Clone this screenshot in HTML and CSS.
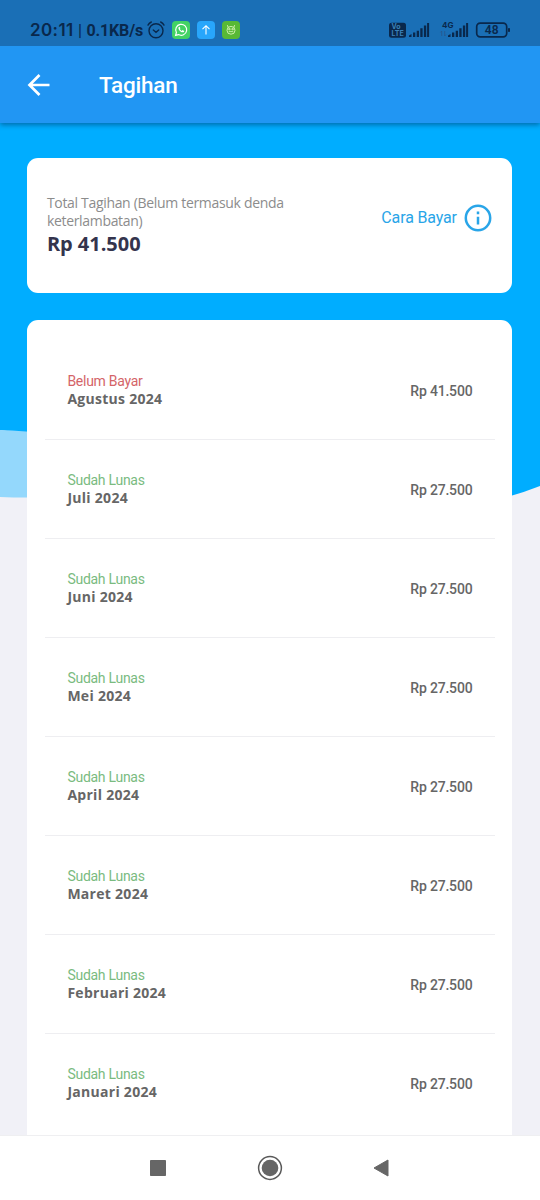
FILE: index.html
```html
<!DOCTYPE html>
<html lang="id">
<head>
<meta charset="utf-8">
<title>Tagihan</title>
<link rel="stylesheet" href="styles.css">
</head>
<body>
<div class="screen">
  <header class="top">
    <div class="status">
      <span class="clock">20:11</span><span class="sep">|</span><span class="speed">0.1KB/s</span>
      <svg class="alarm" width="18" height="18" viewBox="0 0 18 18" fill="none" stroke="#09284c" stroke-width="1.4" stroke-linecap="round"><circle cx="9" cy="9.8" r="7"/><path d="M1 4.1Q2 2 4.3 1M17 4.1Q16 2 13.7 1M6.3 9l2.7 2.3L11.7 9"/></svg>
      <svg class="app" width="18" height="18" viewBox="0 0 18 18"><rect width="18" height="18" rx="4" fill="#43d264"/><path d="M3.6 14.4l.8-2.9a5.5 5.5 0 1 1 2.1 2.1z" fill="none" stroke="#fff" stroke-width="1.2"/><path d="M6.8 5.9c-1.7 1.8 2.5 6.7 5.2 5l.2-1-1.7-.8-.8.8Q8.3 9.2 7.8 8.1l.6-.8-.7-1.5z" fill="#fff"/></svg>
      <svg class="app" width="18" height="18" viewBox="0 0 18 18"><rect width="18" height="18" rx="4" fill="#28a6fb"/><path d="M9 13.500V4.800M5.500 8.200L9 4.700l3.500 3.500" fill="none" stroke="#fff" stroke-width="1.100"/></svg>
      <svg class="app" width="18" height="18" viewBox="0 0 18 18"><rect width="18" height="18" rx="4" fill="#58b936"/><path d="M6 6L5.500 4.500M12 6l.5-1.500" stroke="#d9f5b9" stroke-width=".9" stroke-linecap="round"/><ellipse cx="9" cy="9.300" rx="4" ry="3.900" fill="none" stroke="#d9f5b9" stroke-width=".9"/><path d="M6.700 7.600h1.400v1.200H6.700zM9.900 7.600h1.400v1.200H9.900zM6.800 10.600h4.400" fill="none" stroke="#d9f5b9" stroke-width=".8"/></svg>
      <svg class="signals" width="122" height="20" viewBox="0 0 122 20" fill="#09284c">
        <rect x="0" y="2.700" width="17" height="15" rx="2.500"/>
        <text class="volte" x="2.500" y="9">Vo</text><text class="volte" x="2.500" y="16.300">LTE</text>
        <path d="M20 17v-1.500l2.500-1.400V17zM24 17v-4.500h2.300V17zM27.700 17v-6.300H30V17zM31.300 17V8.300h2.300V17zM34.900 17V5.500h2.300V17zM38.100 17V3h2v14z"/>
        <text class="network" x="53" y="7.500">4G</text>
        <path d="M52.700 16V11m-1.200 1.400l1.200-1.400M55.700 11v5m1.200-1.400L55.700 16" fill="none" stroke="#27578c" stroke-width=".8"/>
        <path d="M59 17v-1.500l2.500-1.400V17zM63 17v-4.500h2.300V17zM66.700 17v-6.300H69V17zM70.300 17V8.300h2.300V17zM73.900 17V5.500h2.300V17zM77.100 17V3h2v14z"/>
        <rect x="87.700" y="3.200" width="30" height="13.600" rx="3.500" fill="none" stroke="#09284c" stroke-width="1.700"/>
        <rect x="119" y="8" width="2" height="4" rx=".8"/>
        <text class="charge" x="102.700" y="14.200" text-anchor="middle">48</text>
      </svg>
    </div>
    <div class="appbar">
      <svg class="back" width="24" height="24" viewBox="0 0 24 24" fill="none" stroke="#fff" stroke-width="2.700"><path d="M23.500 12H4M13.500 2L3.500 12l10 10"/></svg>
      <h1 class="title">Tagihan</h1>
    </div>
  </header>
  <main class="content">
    <svg class="waves" width="540" height="500" viewBox="0 0 540 500"><path d="M0 0H540V363Q512 374 490 378L0 307z" fill="#00adff"/><path d="M0 307Q22 307.500 60 312V374Q25 375 0 374z" fill="#94d8fc"/></svg>
    <section class="card summary">
      <div class="total">
        <p class="caption">Total Tagihan (Belum termasuk denda keterlambatan)</p>
        <p class="amount">Rp 41.500</p>
      </div>
      <div class="howto"><span>Cara Bayar</span>
        <svg width="28" height="28" viewBox="0 0 28 28" fill="none" stroke="#29a5e8" stroke-width="2.500"><circle cx="14" cy="14" r="12.200"/><path d="M14 12.700v7.800M14 7.600v2.600"/></svg>
      </div>
    </section>
    <section class="card bills">
      <div class="row"><div class="bill"><p class="state unpaid">Belum Bayar</p><p class="month">Agustus 2024</p></div><span class="price">Rp 41.500</span></div>
      <div class="row"><div class="bill"><p class="state">Sudah Lunas</p><p class="month">Juli 2024</p></div><span class="price">Rp 27.500</span></div>
      <div class="row"><div class="bill"><p class="state">Sudah Lunas</p><p class="month">Juni 2024</p></div><span class="price">Rp 27.500</span></div>
      <div class="row"><div class="bill"><p class="state">Sudah Lunas</p><p class="month">Mei 2024</p></div><span class="price">Rp 27.500</span></div>
      <div class="row"><div class="bill"><p class="state">Sudah Lunas</p><p class="month">April 2024</p></div><span class="price">Rp 27.500</span></div>
      <div class="row"><div class="bill"><p class="state">Sudah Lunas</p><p class="month">Maret 2024</p></div><span class="price">Rp 27.500</span></div>
      <div class="row"><div class="bill"><p class="state">Sudah Lunas</p><p class="month">Februari 2024</p></div><span class="price">Rp 27.500</span></div>
      <div class="row"><div class="bill"><p class="state">Sudah Lunas</p><p class="month">Januari 2024</p></div><span class="price">Rp 27.500</span></div>
    </section>
  </main>
  <nav class="navbar">
    <svg width="16" height="16" viewBox="0 0 16 16"><rect width="16" height="16" rx=".8" fill="#666"/></svg>
    <svg width="26" height="26" viewBox="0 0 26 26"><circle cx="13" cy="13" r="11.400" fill="none" stroke="#595959" stroke-width="1.500"/><circle cx="13" cy="13" r="8.300" fill="#666"/></svg>
    <svg width="16" height="18" viewBox="0 0 16 18"><path d="M1 9L15 1v16z" fill="#666" stroke="#666" stroke-linejoin="round"/></svg>
  </nav>
</div>
</body>
</html>
```
FILE: styles.css
```css
* { box-sizing: border-box; }
body, p, h1 { margin: 0; }
body { font-family: Roboto, "Liberation Sans", sans-serif; }
.screen { width: 540px; height: 1200px; display: flex; flex-direction: column; overflow: hidden; background: #f1f1f7; }
.top { position: relative; z-index: 2; height: 123px; flex: none; background: #2196f3; box-shadow: 0 2px 5px rgba(0, 30, 70, .45); }
.status { height: 46px; padding: 14px 0 0 30px; display: flex; align-items: center; background: #1a6fb6; color: #09284c; white-space: nowrap; }
.clock { width: 48px; font: 600 17px/32px Inter, sans-serif; letter-spacing: .4px; }
.sep { width: 8.5px; font-size: 16px; font-weight: 500; }
.speed { width: 60.5px; font-size: 16px; font-weight: 700; letter-spacing: -.15px; }
.alarm { flex: none; margin-right: 7px; }
.app { flex: none; margin-right: 7px; }
.signals { flex: none; margin-left: 142px; }
.volte { font: 700 7px Inter, sans-serif; fill: #3c82b9; }
.network { font: 700 8px Inter, sans-serif; }
.charge { font: 600 12px Roboto, sans-serif; }
.appbar { height: 77px; padding-left: 26px; display: flex; align-items: center; color: #fff; }
.back { flex: none; margin-right: 49px; }
.title { font-size: 22.5px; font-weight: 500; line-height: 28px; letter-spacing: -.2px; }
.content { position: relative; flex: 1; min-height: 0; padding: 34.5px 27.6px 0 27.4px; overflow: hidden; }
.waves { position: absolute; left: 0; top: 0; }
.card { position: relative; background: #fff; border-radius: 11px; }
.summary { height: 135px; padding: 0 20.5px 0 19.5px; margin-bottom: 27.5px; display: flex; align-items: center; justify-content: space-between; }
.total { width: 260px; padding-top: 1px; font-family: "Open Sans", sans-serif; }
.caption { font-size: 14px; line-height: 18px; letter-spacing: -.32px; color: #8c8c8c; }
.amount { font-size: 20px; line-height: 28px; font-weight: 700; letter-spacing: -.03px; color: #34344d; }
.howto { display: flex; align-items: center; gap: 7px; font-size: 16px; letter-spacing: -.15px; color: #29a5e8; padding-bottom: 15px; }
.bills { padding: 21px 17.5px 0; height: 900px; }
.row { height: 99px; padding: 0 22.5px; display: flex; align-items: center; justify-content: space-between; border-bottom: 1px solid #eeeef1; }
.row:last-child { border-bottom-color: transparent; }
.bill { padding-bottom: 2px; }
.state { font-size: 14px; line-height: 18px; letter-spacing: -.27px; color: #7abb7f; }
.unpaid { color: #d46468; }
.month { font: 700 14px/17px "Open Sans", sans-serif; letter-spacing: .28px; color: #666; }
.price { font-size: 14px; font-weight: 500; letter-spacing: -.2px; color: #666; padding-top: 1px; }
.navbar { position: relative; z-index: 1; height: 65px; flex: none; display: flex; align-items: center; justify-content: space-between; padding: 0 151px 0 150px; border-top: 1px solid #efeff1; background: #fff; }
```
